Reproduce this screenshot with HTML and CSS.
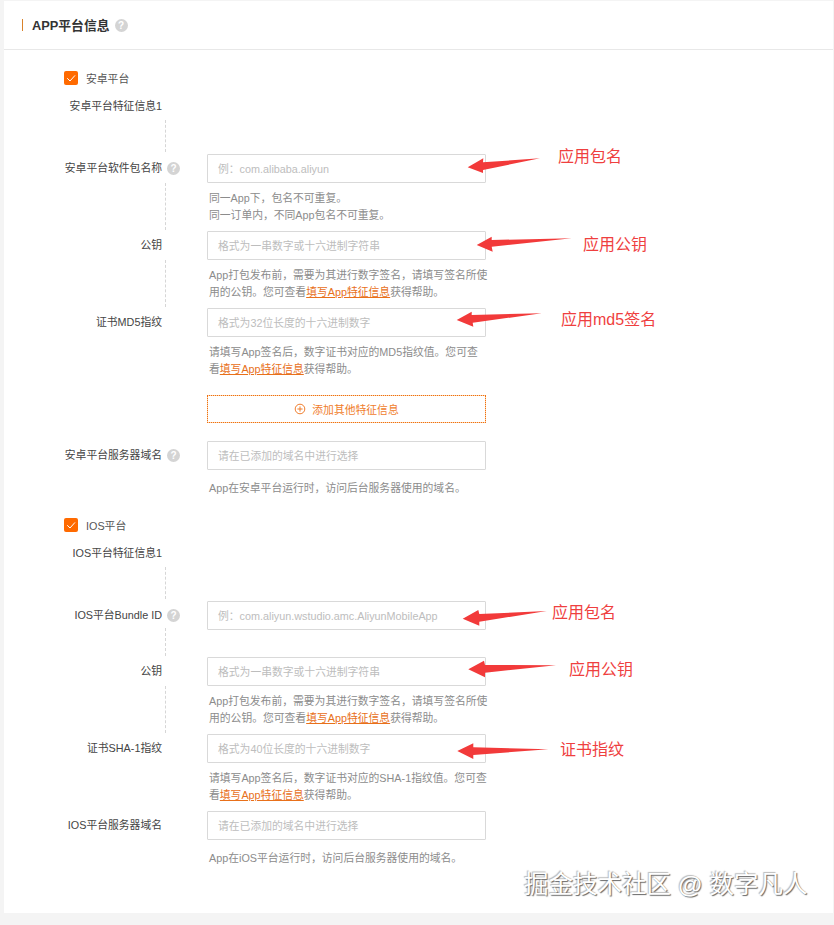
FILE: index.html
```html
<!DOCTYPE html>
<html lang="zh-CN">
<head>
<meta charset="utf-8">
<title>APP平台信息</title>
<link rel="stylesheet" href="styles.css">
</head>
<body>
<main class="card">
  <header class="card-head">
    <span class="accent"></span>
    <h2 class="title">APP平台信息</h2>
    <span class="help">?</span>
  </header>
  <form class="form">
    <section class="platform">
      <label class="check"><span class="box"><svg viewBox="0 0 14 14" width="14" height="14"><path d="M3.2 7.2 6 10l5-5.6" fill="none" stroke="#fff" stroke-width="1"/></svg></span><span>安卓平台</span></label>
      <div class="feature">安卓平台特征信息1</div>
      <div class="row row-first">
        <div class="label">安卓平台软件包名称</div><div class="slot"><span class="help">?</span></div>
        <div class="field"><div class="input">例：com.alibaba.aliyun</div>
          <p class="hint">同一App下，包名不可重复。<br>同一订单内，不同App包名不可重复。</p></div>
      </div>
      <div class="row row-linked">
        <div class="label">公钥</div><div class="slot"></div>
        <div class="field"><div class="input">格式为一串数字或十六进制字符串</div>
          <p class="hint">App打包发布前，需要为其进行数字签名，请填写签名所使用的公钥。您可查看<a class="link">填写App特征信息</a>获得帮助。</p></div>
      </div>
      <div class="row row-linked">
        <div class="label">证书MD5指纹</div><div class="slot"></div>
        <div class="field"><div class="input">格式为32位长度的十六进制数字</div>
          <p class="hint">请填写App签名后，数字证书对应的MD5指纹值。您可查看<a class="link">填写App特征信息</a>获得帮助。</p></div>
      </div>
      <div class="row row-add">
        <div class="label"></div><div class="slot"></div>
        <div class="field"><div class="add"><svg viewBox="0 0 12 12" width="12" height="12"><circle cx="6" cy="6" r="4.8" fill="none" stroke="#f07d2c"/><path d="M6 3.4v5.2M3.4 6h5.2" stroke="#f07d2c"/></svg><span>添加其他特征信息</span></div></div>
      </div>
      <div class="row row-domain">
        <div class="label">安卓平台服务器域名</div><div class="slot"><span class="help">?</span></div>
        <div class="field"><div class="input">请在已添加的域名中进行选择</div>
          <p class="hint">App在安卓平台运行时，访问后台服务器使用的域名。</p></div>
      </div>
    </section>
    <section class="platform platform-ios">
      <label class="check"><span class="box"><svg viewBox="0 0 14 14" width="14" height="14"><path d="M3.2 7.2 6 10l5-5.6" fill="none" stroke="#fff" stroke-width="1"/></svg></span><span>IOS平台</span></label>
      <div class="feature">IOS平台特征信息1</div>
      <div class="row row-first row-single">
        <div class="label">IOS平台Bundle ID</div><div class="slot"><span class="help">?</span></div>
        <div class="field"><div class="input">例：com.aliyun.wstudio.amc.AliyunMobileApp</div></div>
      </div>
      <div class="row row-short">
        <div class="label">公钥</div><div class="slot"></div>
        <div class="field"><div class="input">格式为一串数字或十六进制字符串</div>
          <p class="hint">App打包发布前，需要为其进行数字签名，请填写签名所使用的公钥。您可查看<a class="link">填写App特征信息</a>获得帮助。</p></div>
      </div>
      <div class="row row-linked">
        <div class="label">证书SHA-1指纹</div><div class="slot"></div>
        <div class="field"><div class="input">格式为40位长度的十六进制数字</div>
          <p class="hint">请填写App签名后，数字证书对应的SHA-1指纹值。您可查看<a class="link">填写App特征信息</a>获得帮助。</p></div>
      </div>
      <div class="row row-domain">
        <div class="label">IOS平台服务器域名</div><div class="slot"></div>
        <div class="field"><div class="input">请在已添加的域名中进行选择</div>
          <p class="hint">App在iOS平台运行时，访问后台服务器使用的域名。</p></div>
      </div>
    </section>
  </form>

  <svg class="arrows" width="834" height="925" viewBox="0 0 834 925">
    <g fill="#f23a3a">
      <path d="M467.7 167.3 483.3 158.3 483 162.3 540 158.3 483 170 483 173Z"/>
      <path d="M476.7 245 491.7 236.7 491.7 240 571.7 238.3 491.7 246.7 492.7 251.7Z"/>
      <path d="M456.7 320 471.7 311.7 471.7 315 541.7 313.3 472.7 322.7 473.3 326.7Z"/>
      <path d="M462.7 618.7 478.3 610 479.3 614 546.7 611 479.3 621.7 479.3 625.7Z"/>
      <path d="M468.3 669.3 484 660.7 485 665 556 665.3 485 672.7 485 677.3Z"/>
      <path d="M457.3 751 473.3 743.3 473.3 747.3 548.3 749.3 473.3 755 473.3 759Z"/>
    </g>
  </svg>
  <span class="note note-1">应用包名</span>
  <span class="note note-2">应用公钥</span>
  <span class="note note-3">应用md5签名</span>
  <span class="note note-4">应用包名</span>
  <span class="note note-5">应用公钥</span>
  <span class="note note-6">证书指纹</span>
  <span class="watermark">掘金技术社区 @ 数字凡人</span>
</main>
</body>
</html>
```

FILE: styles.css
```css
* { box-sizing: border-box; }
html, body { margin: 0; padding: 0; }
body {
  width: 834px;
  height: 925px;
  overflow: hidden;
  background: #f4f4f4;
  padding: 1px 1px 0 4px;
  font-family: "Liberation Sans", "Noto Sans CJK SC", sans-serif;
  font-size: 10.8px;
  color: #333;
}
.card {
  background: #fff;
  height: 912px;
  width: 829px;
}
.card-head {
  height: 49px;
  border-bottom: 1px solid #e8e8e8;
  display: flex;
  align-items: center;
  padding-left: 18px;
}
.accent { width: 1px; height: 12px; background: #d9822b; margin-right: 9px; }
.title { margin: 0 5px 2px 0; font-size: 12.8px; font-weight: 700; color: #333; }
.help {
  display: inline-block;
  width: 13px;
  height: 13px;
  line-height: 13px;
  border-radius: 50%;
  background: #d4d4d4;
  color: #fff;
  font-size: 10px;
  font-weight: 700;
  text-align: center;
}
.form { padding-top: 21px; }
.platform-ios { margin-top: 21px; }
.check { display: flex; align-items: center; gap: 8px; margin-left: 60px; height: 14px; color: #555; }
.box { width: 14px; height: 14px; background: #ff6a00; border-radius: 2px; display: block; }
.box svg { display: block; }
.feature { width: 158px; text-align: right; margin-top: 14px; line-height: 14px; height: 14px; color: #444; }
.row {
  display: grid;
  grid-template-columns: 158px 45px 279px;
  position: relative;
  min-height: 29px;
  margin-bottom: 7px;
}
.row:last-child { margin-bottom: 0; }
.row-first { margin-top: 41px; }
.row-single { margin-bottom: 27px; }
.row-first::before,
.row-linked::before,
.row-short::before {
  content: "";
  position: absolute;
  left: 161px;
  border-left: 1px dashed #d6d6d6;
}
.row-first::before { top: -34px; height: 32px; }
.row-linked::before { top: -48px; height: 47px; }
.row-short::before { top: -29px; height: 28px; }
.label { text-align: right; line-height: 29px; color: #444; white-space: nowrap; }
.slot { padding: 8px 0 0 5px; line-height: 13px; display: flex; align-items: flex-start; }
.input {
  height: 29px;
  border: 1px solid #d9d9d9;
  border-radius: 1px;
  line-height: 28px;
  padding-left: 10px;
  color: #bdbdbd;
  background: #fff;
}
.hint { margin: 7px 0 0; padding-left: 2px; line-height: 17px; color: #8c8c8c; width: 281.5px; }
.row-domain .hint { margin-top: 10px; }
.link { color: #e8701a; text-decoration: underline; }
.row-add { margin-top: 17px; margin-bottom: 17px; }
.add {
  height: 28px;
  color: #f07d2c;
  display: flex;
  align-items: center;
  justify-content: center;
  gap: 6px;
  background-image:
    repeating-linear-gradient(90deg, #f07010 0 1px, #fbd2ab 1px 2px),
    repeating-linear-gradient(90deg, #f07010 0 1px, #fbd2ab 1px 2px),
    repeating-linear-gradient(0deg, #f07010 0 1px, #fbd2ab 1px 2px),
    repeating-linear-gradient(0deg, #f07010 0 1px, #fbd2ab 1px 2px);
  background-size: 100% 1px, 100% 1px, 1px 100%, 1px 100%;
  background-position: 0 0, 0 100%, 0 0, 100% 0;
  background-repeat: no-repeat;
}
.add svg { display: block; }
.arrows { position: absolute; left: 0; top: 0; pointer-events: none; }
.note { position: absolute; font-size: 16px; line-height: 20px; color: #ef3f3f; white-space: nowrap; }
.note-1 { left: 558px; top: 147px; }
.note-2 { left: 583px; top: 235px; }
.note-3 { left: 561px; top: 310px; }
.note-4 { left: 552px; top: 603px; }
.note-5 { left: 569px; top: 660px; }
.note-6 { left: 560px; top: 740px; }
.watermark {
  position: absolute;
  left: 524px;
  top: 871px;
  font-size: 24.5px;
  line-height: 28px;
  color: #fff;
  white-space: nowrap;
  text-shadow: 1px 1px 1px #666, -1px -1px 1px #bbb;
}
```
